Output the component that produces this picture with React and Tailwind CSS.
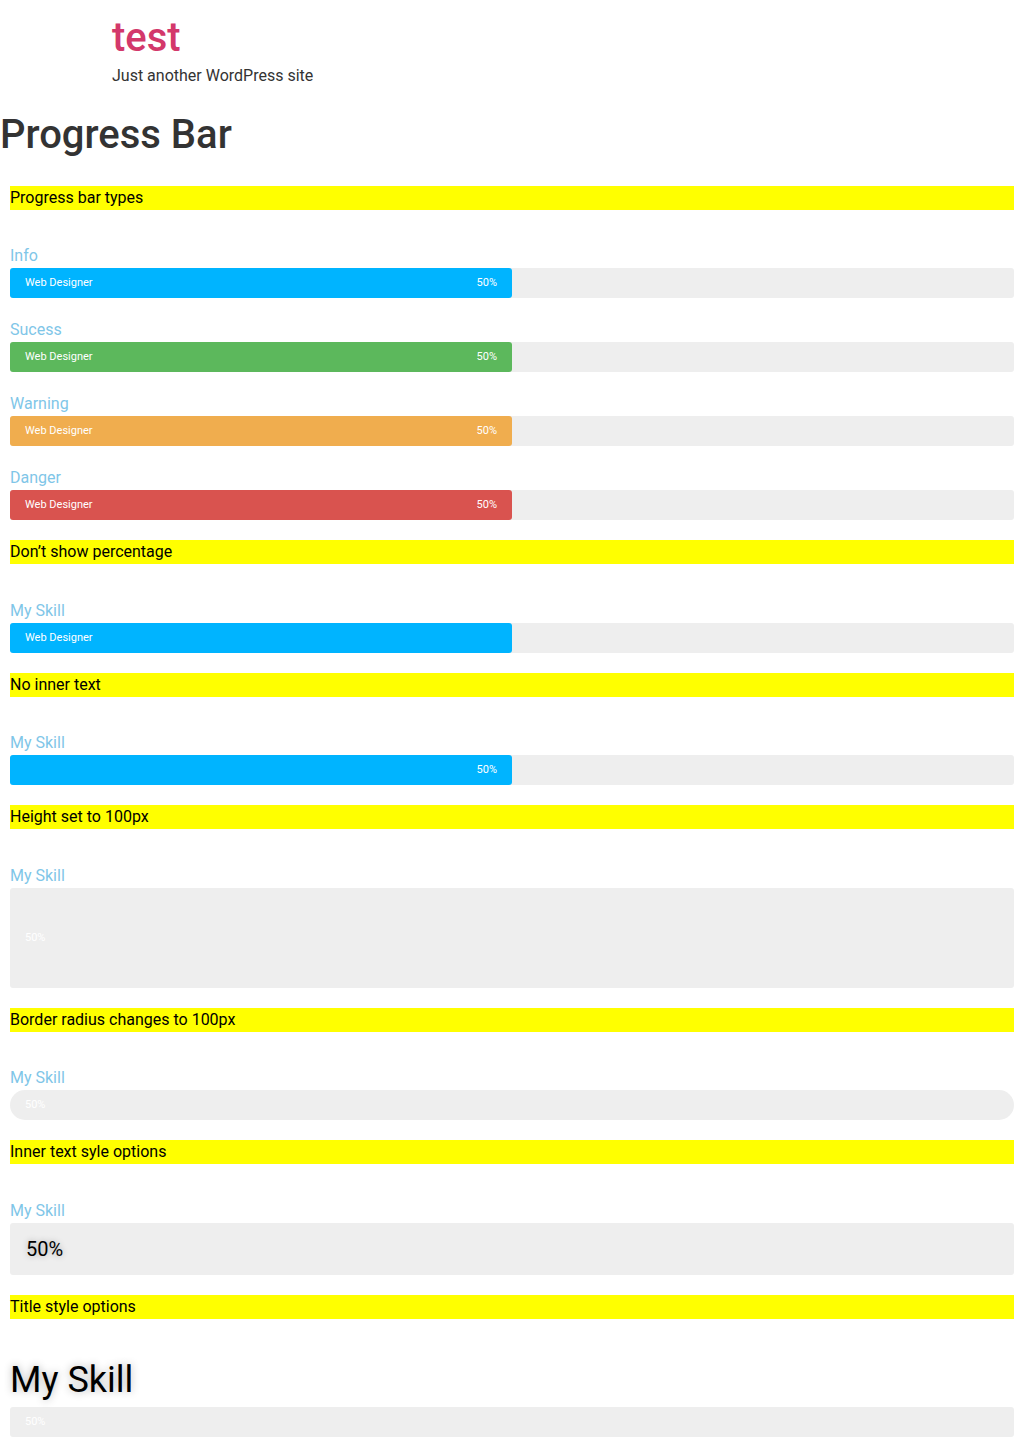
import React from 'react';

const bars = [
    { label: 'Info', color: 'bg-[#00b4ff]' },
    { label: 'Sucess', color: 'bg-[#5cb85c]' },
    { label: 'Warning', color: 'bg-[#f0ad4e]' },
    { label: 'Danger', color: 'bg-[#d9534f]' },
];

const Heading = ({ children }) => (
    <h3 className="bg-[#ffff00] text-black text-base leading-6 mb-[34.45px]">{children}</h3>
);

const Label = ({ children }) => (
    <div className="text-[#7fc6e8] text-base leading-6">{children}</div>
);

// Filled bar: inner text on the left, percentage on the right
const FilledBar = ({ color, text, percent }) => (
    <div className="h-[30px] bg-[#eeeeee] rounded-[3px] mb-5">
        <div className={`h-full w-1/2 ${color} rounded-[3px] flex items-center justify-between px-[15px] text-white text-[11px]`}>
            <span>{text}</span>
            <span>{percent}</span>
        </div>
    </div>
);

const App = () => {
    return (
        <div className="bg-white min-h-[1447px] font-['Roboto','Liberation_Sans',sans-serif] text-[#333333]">
            <header className="pl-[112px] pt-[14px]">
                <div className="text-[40px] leading-[48px] font-medium text-[#d3386b]">test</div>
                <div className="text-base leading-6 mt-0.5">Just another WordPress site</div>
            </header>

            <h1 className="text-[40px] leading-[48px] font-medium mt-[23px] mb-[27px]">Progress Bar</h1>

            <div className="mx-[10px]">
                <Heading>Progress bar types</Heading>
                {bars.map((bar, index) => (
                    <div key={index}>
                        <Label>{bar.label}</Label>
                        <FilledBar color={bar.color} text="Web Designer" percent="50%" />
                    </div>
                ))}

                <Heading>Don’t show percentage</Heading>
                <Label>My Skill</Label>
                <FilledBar color="bg-[#00b4ff]" text="Web Designer" percent="" />

                <Heading>No inner text</Heading>
                <Label>My Skill</Label>
                <FilledBar color="bg-[#00b4ff]" text="" percent="50%" />

                <Heading>Height set to 100px</Heading>
                <Label>My Skill</Label>
                <div className="h-[100px] bg-[#eeeeee] rounded-[3px] mb-5 flex items-center px-[15px] text-white text-[11px]">50%</div>

                <Heading>Border radius changes to 100px</Heading>
                <Label>My Skill</Label>
                <div className="h-[30px] bg-[#eeeeee] rounded-[100px] mb-5 flex items-center px-[15px] text-white text-[11px]">50%</div>

                <Heading>Inner text syle options</Heading>
                <Label>My Skill</Label>
                <div className="h-[52px] bg-[#eeeeee] rounded-[3px] mb-5 flex items-center px-[16px] text-black text-[20px] [text-shadow:0_0_6px_rgba(0,0,0,0.3)]">50%</div>

                <Heading>Title style options</Heading>
                <div className="text-black text-[36px] leading-[54px] mt-px [text-shadow:0_0_8px_rgba(0,0,0,0.3)]">My Skill</div>
                <div className="h-[30px] bg-[#eeeeee] rounded-[3px] flex items-center px-[15px] text-white text-[11px]">50%</div>
            </div>
        </div>
    );
};

export default App;
